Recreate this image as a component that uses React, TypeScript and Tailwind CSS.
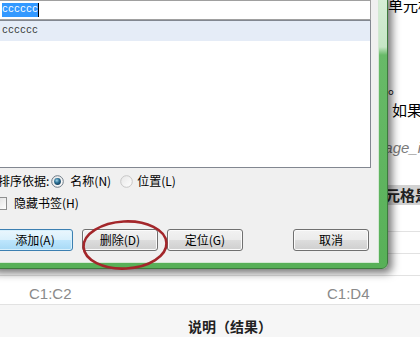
import React from "react";

const btn =
  "h-[22px] w-[76px] shrink-0 rounded-[3px] border border-[#707070] bg-[linear-gradient(#f2f2f2_0%,#ebebeb_50%,#dddddd_50%,#cfcfcf_100%)] shadow-[inset_0_0_0_1px_#fbfbfb] text-[12px] leading-[20px] text-black";

const Radio = ({ id, checked }: { id: string; checked?: boolean }) => (
  <svg width="13" height="13" viewBox="0 0 13 13" className="shrink-0">
    <defs>
      <linearGradient id={`${id}-bg`} x1="0" y1="0" x2="1" y2="1">
        <stop offset="0" stopColor="#e6e6e6" />
        <stop offset="1" stopColor="#ffffff" />
      </linearGradient>
      <radialGradient id={`${id}-dot`} cx="0.4" cy="0.35" r="0.7">
        <stop offset="0" stopColor="#9fd4ea" />
        <stop offset="0.5" stopColor="#2a6f93" />
        <stop offset="1" stopColor="#123c5a" />
      </radialGradient>
    </defs>
    <circle
      cx="6.5"
      cy="6.5"
      r="5.8"
      fill={`url(#${id}-bg)`}
      stroke={checked ? "#6d7a86" : "#c6c6c6"}
    />
    {checked && <circle cx="6.5" cy="6.5" r="3.4" fill={`url(#${id}-dot)`} />}
  </svg>
);

export default function App() {
  return (
    <div className="relative w-[420px] h-[337px] overflow-hidden bg-white font-['Noto_Sans_CJK_SC',sans-serif]">
      {/* page behind the dialog */}
      <div className="flex flex-col">
        <div className="flex flex-col h-[205px] pl-[388px] whitespace-nowrap text-[15px] text-black">
          <div className="mt-[-5px] leading-[20px]">单元格的</div>
          <div className="mt-[62px] leading-[20px]">。</div>
          <div className="mt-[3px] leading-[20px] pl-[4px]">如果</div>
          <div className="mt-[18px] ml-[-12px] leading-[20px] italic text-[#7a7a7a] font-['Liberation_Sans',sans-serif]">
            page_id
          </div>
          <div className="mt-[27px] ml-[-8px] h-[20px] pl-[5px] leading-[20px] bg-[#d2d2d2] font-bold text-[#222]">
            元格是
          </div>
        </div>

        <div className="h-[27px] border-b border-[#e2e2e2]" />
        <div className="h-[22px] border-b border-[#e2e2e2]" />
        <div className="flex h-[22px] border-b border-[#e2e2e2] text-[15px] leading-[17px] text-[#333] font-['Liberation_Sans',sans-serif]">
          <div className="w-[327px] pl-[29px]">C1:C1</div>
          <div>C1:D3</div>
        </div>
        <div className="flex h-[29px] border-b border-[#e2e2e2] pt-[9px] text-[15px] leading-[17px] text-[#8a8a8a] font-['Liberation_Sans',sans-serif]">
          <div className="w-[327px] pl-[29px]">C1:C2</div>
          <div>C1:D4</div>
        </div>
        <div className="h-[40px] bg-[#f6f6f6] pl-[188px] pt-[11px] text-[14px] leading-[20px] font-bold text-[#222]">
          说明（结果）
        </div>
      </div>

      {/* bookmark dialog window */}
      <div className="absolute left-[-12px] top-[-9px] z-10 w-[400px] h-[278px] rounded-[6px] border border-[#3d7a3d] bg-[linear-gradient(180deg,#d8efd8_0px,#c6e6c6_55px,#68ba68_63px,#58b058_100%)] pl-[7px] pt-[7px] pr-[8px] pb-[5px] shadow-[4px_4px_9px_rgba(0,0,0,0.55)]">
        <div className="flex flex-col w-full h-full border border-[#d3e8d3] bg-[#f0f0f0] pl-[2px] pr-[7px] text-[12px] text-black">
          {/* name input */}
          <div className="flex items-center h-[20px] border border-[#a0a0a0] bg-white pl-[2px]">
            <span className="h-[14px] bg-[#3399ff] text-white text-[10px] leading-[14px] font-['Liberation_Mono',monospace]">
              cccccc
            </span>
            <span className="w-px h-[14px] bg-black" />
          </div>

          {/* bookmark list */}
          <div className="h-[148px] border border-[#828790] bg-white">
            <div className="h-[20px] bg-[#e5ecf7] pl-[2px] text-[10px] leading-[20px] text-[#333] font-['Liberation_Mono',monospace]">
              cccccc
            </div>
          </div>

          {/* sort by */}
          <div className="flex items-center mt-[5px] h-[16px] ml-[-1px] whitespace-nowrap">
            <span>排序依据:</span>
            <span className="ml-[2px] flex">
              <Radio id="r1" checked />
            </span>
            <span className="ml-[6px]">名称(N)</span>
            <span className="ml-[9px] flex">
              <Radio id="r2" />
            </span>
            <span className="ml-[4px]">位置(L)</span>
          </div>

          {/* hidden bookmarks */}
          <div className="flex items-center mt-[7px] h-[14px] ml-[-5px]">
            <span className="w-[13px] h-[13px] border border-[#8e8f8f] bg-[linear-gradient(135deg,#dcdcdc,#ffffff)]" />
            <span className="ml-[7px]">隐藏书签(H)</span>
          </div>

          {/* buttons */}
          <div className="flex mt-[19px] ml-[-2px] mr-[2px] gap-[9px]">
            <button className="h-[22px] w-[76px] shrink-0 rounded-[3px] border border-[#3c7fb1] bg-[linear-gradient(#eaf6fd_0%,#d9f0fc_50%,#bee6fd_50%,#a7d9f5_100%)] shadow-[inset_0_0_0_1px_#d8f0fc] text-[12px] leading-[20px] text-black">
              添加(A)
            </button>
            <button className={btn}>删除(D)</button>
            <button className={btn}>定位(G)</button>
            <button className={`${btn} ml-auto`}>取消</button>
          </div>
        </div>
      </div>

      {/* red annotation ring */}
      <svg
        className="absolute left-[80px] top-[218px] z-20"
        width="90"
        height="54"
        viewBox="0 0 90 54"
      >
        <ellipse
          cx="45"
          cy="27"
          rx="41.5"
          ry="23.5"
          fill="none"
          stroke="#a3262a"
          strokeWidth="2.6"
          transform="rotate(-3 45 27)"
        />
      </svg>
    </div>
  );
}
